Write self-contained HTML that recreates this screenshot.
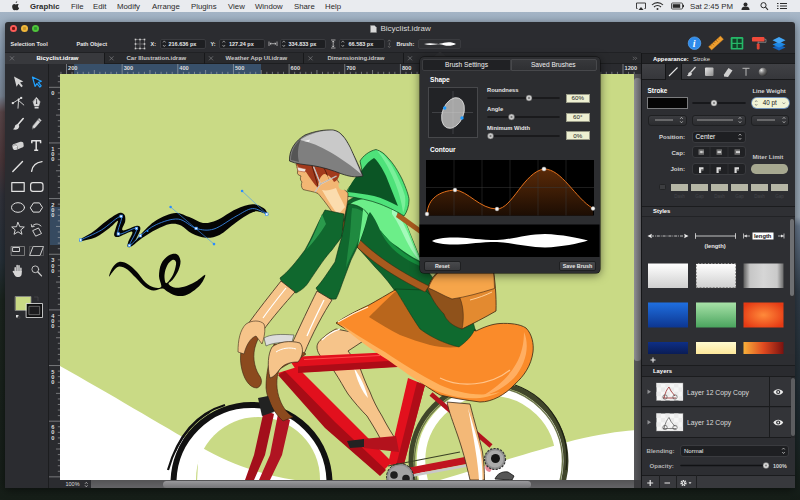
<!DOCTYPE html>
<html><head><meta charset="utf-8"><title>Graphic</title>
<style>
*{box-sizing:border-box;margin:0;padding:0}
html,body{width:800px;height:500px;overflow:hidden;background:#1a221c;font-family:"Liberation Sans",sans-serif}
.a{position:absolute}
#desk{left:0;top:0;width:800px;height:500px;background:
 linear-gradient(to bottom,#a9b8c8 0px,#9fb0c2 22px,#8597ab 60px,#7c8898 96px,#5c484b 112px,#4d383b 160px,#33343d 195px,#27313a 260px,#1b251f 300px,#161e18 500px)}
#deskr{left:790px;top:12px;width:10px;height:488px;background:linear-gradient(to bottom,#a9b8c8 0,#9fb0c2 10px,#97a6b6 100px,#9aa8b6 205px,#66768a 214px,#4a5868 250px,#323e4a 280px,#27333c 340px,#1e2a30 400px,#18221e 460px,#141c17 488px)}
#menubar{left:0;top:0;width:800px;height:12px;background:#e9ebef;color:#2a2a2a;font-size:7.800px;line-height:13px;white-space:nowrap}
#menubar span{position:absolute;top:0}
#win{left:5px;top:22px;width:790px;height:466px;background:#2b2c30;border-radius:3px 3px 0 0;overflow:hidden;box-shadow:0 2px 8px rgba(0,0,0,.5)}
#in{left:-5px;top:-22px;width:800px;height:500px}
.t{position:absolute;white-space:nowrap;color:#e6e6e6;font-size:5.5px;line-height:8px;font-weight:bold}
.fld{position:absolute;background:#1e1f22;border:0.5px solid #3a3b3f;border-radius:2px;height:10px}
.r{font-weight:normal}
</style></head><body>
<div id="desk" class="a"></div>
<div id="deskr" class="a"></div>
<div id="menubar" class="a">
<svg class="a" style="left:11.200px;top:1px" width="9" height="10" viewBox="0 0 18 20"><path d="M12.5 0.5c.2 1.6-1.2 3.6-3 3.5-.2-1.700 1.400-3.400 3-3.500zM15.800 7.200c-1.400.9-2 2.100-2 3.400 0 1.600 1 3 2.500 3.600-.6 1.700-2.200 4.500-3.900 4.500-1.100 0-1.600-.7-2.900-.7-1.300 0-1.900.7-2.900.7-1.800 0-4.300-4-4.300-7.400 0-3.300 2.100-5.100 4.200-5.100 1.300 0 2.300.8 3 .8.800 0 1.900-.9 3.400-.9 1.100 0 2.200.4 2.900 1.100z" fill="#2a2a2a"/></svg>
<span style="left:30px;font-weight:bold">Graphic</span>
<span style="left:71px">File</span>
<span style="left:93px">Edit</span>
<span style="left:117px">Modify</span>
<span style="left:152px">Arrange</span>
<span style="left:191px">Plugins</span>
<span style="left:228px">View</span>
<span style="left:255px">Window</span>
<span style="left:294px">Share</span>
<span style="left:325px">Help</span>
<span style="left:690px">Sat 2:45 PM</span>
<svg class="a" style="left:634px;top:0" width="160" height="12" viewBox="634 0 160 12">
<!-- airplay -->
<path d="M637.500,8.500h-1v-5.500h9v5.500h-1" fill="none" stroke="#2a2a2a" stroke-width="0.900"/><path d="M638.500,10l2.500,-3l2.500,3z" fill="#2a2a2a"/>
<!-- wifi -->
<path d="M652,5a7.500,7.500 0 0 1 11,0" fill="none" stroke="#2a2a2a" stroke-width="1.100"/><path d="M654,7a5,5 0 0 1 7,0" fill="none" stroke="#2a2a2a" stroke-width="1.100"/><circle cx="657.500" cy="9" r="1" fill="#2a2a2a"/>
<!-- battery -->
<rect x="671.500" y="3" width="11" height="6" rx="1" fill="none" stroke="#2a2a2a" stroke-width="0.800"/><rect x="672.700" y="4.200" width="7.500" height="3.600" fill="#2a2a2a"/><rect x="683" y="4.800" width="1" height="2.400" fill="#2a2a2a"/>
<!-- user -->
<circle cx="745.500" cy="4.500" r="2" fill="#2a2a2a"/><path d="M741.500,10c0,-3 2,-3.500 4,-3.500s4,.5 4,3.500z" fill="#2a2a2a"/>
<!-- search -->
<circle cx="763.500" cy="5.200" r="2.600" fill="none" stroke="#2a2a2a" stroke-width="1"/><path d="M765.500,7.200l2.500,2.600" stroke="#2a2a2a" stroke-width="1.100"/>
<!-- list -->
<path d="M777,3.500h1.500M780,3.500h7M777,6h1.500M780,6h7M777,8.500h1.500M780,8.500h7" stroke="#2a2a2a" stroke-width="1.100"/>
</svg>
</div>
<div id="win" class="a"><div id="in" class="a">
<!-- traffic lights -->
<div class="a" style="left:9.500px;top:25.200px;width:7px;height:7px;border-radius:50%;background:radial-gradient(circle,#7a1512 0,#7a1512 1.300px,#fc5b57 1.800px)"></div>
<div class="a" style="left:20.700px;top:25.200px;width:7px;height:7px;border-radius:50%;background:radial-gradient(circle,#c8962a 0,#c8962a 1.300px,#f0b73a 2px)"></div>
<div class="a" style="left:31.800px;top:25.200px;width:7px;height:7px;border-radius:50%;background:radial-gradient(circle,#2f9a2a 0,#2f9a2a 1.300px,#4fc43c 2px)"></div>
<!-- title -->
<svg class="a" style="left:370px;top:24.500px" width="7" height="8" viewBox="0 0 7 8"><path d="M.5.500h4l2 2v5h-6z" fill="#d9d9d9" stroke="#888" stroke-width=".5"/></svg>
<div class="t r" style="left:380.500px;top:24px;font-size:8px;line-height:10px;color:#dcdcdc">Bicyclist.idraw</div>
<!-- toolbar -->
<div class="t" style="left:10.500px;top:39.500px">Selection Tool</div>
<div class="t" style="left:76.500px;top:39.500px">Path Object</div>
<svg class="a" style="left:134px;top:38px" width="12" height="12" viewBox="0 0 12 12"><path d="M1.500,1.500h9v9h-9zM1.500,6h9M6,1.500v9" fill="none" stroke="#8a8a8a" stroke-width=".6"/><g fill="#cfcfcf"><rect x=".7" y=".7" width="1.600" height="1.600"/><rect x="5.200" y=".7" width="1.600" height="1.600"/><rect x="9.700" y=".7" width="1.600" height="1.600"/><rect x=".7" y="5.200" width="1.600" height="1.600"/><rect x="9.700" y="5.200" width="1.600" height="1.600"/><rect x=".7" y="9.700" width="1.600" height="1.600"/><rect x="5.200" y="9.700" width="1.600" height="1.600"/><rect x="9.700" y="9.700" width="1.600" height="1.600"/></g></svg>
<div class="t" style="left:150.500px;top:39.500px">X:</div>
<div class="fld" style="left:160px;top:38.500px;width:46px"></div>
<div class="t" style="left:168.500px;top:39.500px">216.636 px</div>
<div class="t" style="left:210.500px;top:39.500px">Y:</div>
<div class="fld" style="left:219px;top:38.500px;width:45.500px"></div>
<div class="t" style="left:229px;top:39.500px">127.24 px</div>
<div class="fld" style="left:280px;top:38.500px;width:46px"></div>
<div class="t" style="left:288.500px;top:39.500px">334.833 px</div>
<div class="fld" style="left:338.500px;top:38.500px;width:46px"></div>
<div class="t" style="left:348.500px;top:39.500px">66.583 px</div>
<svg class="a" style="left:160px;top:38px" width="240" height="12" viewBox="160 38 240 12" fill="none" stroke="#bdbdbd" stroke-width=".7">
<g id="stp"><path d="M163,42.500l1.300,-1.600l1.300,1.600M163,45l1.300,1.600l1.300,-1.600"/></g>
<path d="M222.500,42.500l1.300,-1.600l1.300,1.600M222.500,45l1.300,1.600l1.300,-1.600"/>
<path d="M282.500,42.500l1.300,-1.600l1.300,1.600M282.500,45l1.300,1.600l1.300,-1.600"/>
<path d="M341.500,42.500l1.300,-1.600l1.300,1.600M341.500,45l1.300,1.600l1.300,-1.600"/>
<!-- width icon -->
<path d="M269,41.500v4.500M277,41.500v4.500M270,43.700h6M271.200,42.700l-1.200,1l1.200,1M274.800,42.700l1.200,1l-1.200,1" stroke="#d5d5d5"/>
<!-- height icon -->
<path d="M331,40h4.500M331,48h4.500M333.200,41v6M332.200,42.200l1,-1.200l1,1.200M332.200,45.800l1,1.200l1,-1.200" stroke="#d5d5d5"/>
<!-- link icon -->
<path d="M388,41.500l1.300,-1.600l1.300,1.600M388,46l1.300,1.600l1.300,-1.600M389.300,42.500v3" stroke="#777"/>
</svg>
<div class="t" style="left:396.500px;top:39.500px">Brush:</div>
<div class="fld" style="left:418px;top:38.500px;width:43px;background:#2f3033"></div>
<svg class="a" style="left:420px;top:40px" width="40" height="8" viewBox="0 0 40 8"><path d="M4,4C8,2.800 12,3 16,3.800C19,4.200 21,3.800 24,2.800C28,1.800 33,2.200 36,4C33,5.800 28,6.200 24,5.200C21,4.300 19,4 16,4.400C12,5 8,5.200 4,4Z" fill="#fff"/></svg>
<!-- right toolbar icons -->
<svg class="a" style="left:684px;top:34px" width="108" height="19" viewBox="684 34 108 19">
<circle cx="694.500" cy="43.200" r="6.300" fill="#2f8bea"/><circle cx="694.500" cy="43.200" r="6.300" fill="none" stroke="#5fb0ff" stroke-width=".6"/>
<text x="692.700" y="46.800" font-family="Liberation Serif,serif" font-style="italic" font-weight="bold" font-size="10" fill="#fff">i</text>
<g transform="rotate(-42 716 43)"><rect x="708" y="40.800" width="16" height="4.500" fill="#f0a030" stroke="#c87818" stroke-width=".4"/><path d="M710.500,40.800v1.800M713,40.800v2.500M715.500,40.800v1.800M718,40.800v2.500M720.500,40.800v1.800" stroke="#8a5008" stroke-width=".55"/></g>
<rect x="730.700" y="37" width="12.600" height="12.600" rx="1.200" fill="#25b868"/><g fill="#123f27"><rect x="732.500" y="38.800" width="4" height="4"/><rect x="737.700" y="38.800" width="4" height="4"/><rect x="732.500" y="44" width="4" height="4"/><rect x="737.700" y="44" width="4" height="4"/></g>
<rect x="752" y="37" width="12.500" height="4.600" rx="1.200" fill="#f04a3a"/><path d="M758.200,41.600v2.200" stroke="#999" stroke-width="1"/><rect x="756.800" y="43.400" width="2.800" height="6" rx=".8" fill="#e04535"/><path d="M764.500,39.300h1.500v3h-7" fill="none" stroke="#aaa" stroke-width=".6"/>
<path d="M779,44.500l6.500,3l-6.500,3l-6.500,-3z" fill="#1565c0"/><path d="M779,41.500l6.500,3l-6.500,3l-6.500,-3z" fill="#1e88e5"/><path d="M779,37l6.500,3.200l-6.500,3.200l-6.500,-3.200z" fill="#42a5f5"/>
</svg>
<!-- tab row -->
<div class="a" style="left:5px;top:52px;width:636px;height:12px;background:#292a2d;border-top:.6px solid #202124;border-bottom:.5px solid #1d1e20"></div>
<div class="a" style="left:5px;top:53px;width:99px;height:10.500px;background:#38393d"></div>
<div class="a" style="left:104px;top:53px;width:.6px;height:10.500px;background:#17181a"></div>
<div class="a" style="left:203.500px;top:53px;width:.6px;height:10.500px;background:#17181a"></div>
<div class="a" style="left:303px;top:53px;width:.6px;height:10.500px;background:#17181a"></div>
<div class="a" style="left:403px;top:53px;width:.6px;height:10.500px;background:#17181a"></div>
<div class="t" style="left:36.500px;top:54.300px;color:#fff;font-size:6px">Bicyclist.idraw</div>
<div class="t" style="left:126.500px;top:54.300px;color:#c9c9c9;font-size:6px">Car Illustration.idraw</div>
<div class="t" style="left:225.500px;top:54.300px;color:#c9c9c9;font-size:6px">Weather App UI.idraw</div>
<div class="t" style="left:327.500px;top:54.300px;color:#c9c9c9;font-size:6px">Dimensioning.idraw</div>
<svg class="a" style="left:5px;top:53px" width="636" height="11" viewBox="5 53 636 11" stroke="#7e7f83" stroke-width=".7" fill="none">
<path d="M10,56.300l4,4M14,56.300l-4,4"/><path d="M109.500,56.300l4,4M113.500,56.300l-4,4"/><path d="M209,56.300l4,4M213,56.300l-4,4"/><path d="M308.500,56.300l4,4M312.500,56.300l-4,4"/><path d="M408,56.300l4,4M412,56.300l-4,4"/>
<path d="M633,56.800l1.500,1.500l-1.500,1.500M635.200,56.800l1.500,1.500l-1.500,1.500" stroke="#8a8a8c" stroke-width=".6"/>
</svg>
<!-- rulers -->
<div class="a" style="left:49px;top:64px;width:592px;height:10px;background:#2a2b2f"></div>
<div class="a" style="left:49px;top:64px;width:11px;height:416px;background:#2a2b2f"></div>
<div class="a" style="left:73.500px;top:64px;width:187.500px;height:10px;background:#38506a"></div>
<div class="a" style="left:50px;top:206.800px;width:10px;height:38.400px;background:#364a60"></div>
<svg class="a" style="left:49px;top:64px" width="592" height="416" viewBox="49 64 592 416">
<path d="M60.94,71.800v2.200M66.50,64v10M72.06,71.800v2.200M77.63,71.800v2.200M83.19,71.800v2.200M88.76,71.800v2.200M94.33,70v4M99.89,71.800v2.200M105.45,71.800v2.200M111.02,71.800v2.200M116.58,71.800v2.200M122.15,64v10M127.72,71.800v2.200M133.28,71.800v2.200M138.84,71.800v2.200M144.41,71.800v2.200M149.97,70v4M155.54,71.800v2.200M161.10,71.800v2.200M166.67,71.800v2.200M172.23,71.800v2.200M177.80,64v10M183.36,71.800v2.200M188.93,71.800v2.200M194.50,71.800v2.200M200.06,71.800v2.200M205.62,70v4M211.19,71.800v2.200M216.75,71.800v2.200M222.32,71.800v2.200M227.88,71.800v2.200M233.45,64v10M239.01,71.800v2.200M244.58,71.800v2.200M250.15,71.800v2.200M255.71,71.800v2.200M261.27,70v4M266.84,71.800v2.200M272.40,71.800v2.200M277.97,71.800v2.200M283.53,71.800v2.200M289.10,64v10M294.67,71.800v2.200M300.23,71.800v2.200M305.79,71.800v2.200M311.36,71.800v2.200M316.93,70v4M322.49,71.800v2.200M328.05,71.800v2.200M333.62,71.800v2.200M339.19,71.800v2.200M344.75,64v10M350.31,71.800v2.200M355.88,71.800v2.200M361.44,71.800v2.200M367.01,71.800v2.200M372.57,70v4M378.14,71.800v2.200M383.70,71.800v2.200M389.27,71.800v2.200M394.83,71.800v2.200M400.40,64v10M405.97,71.800v2.200M411.53,71.800v2.200M417.09,71.800v2.200M422.66,71.800v2.200M428.23,70v4M433.79,71.800v2.200M439.35,71.800v2.200M444.92,71.800v2.200M450.49,71.800v2.200M456.05,64v10M461.62,71.800v2.200M467.18,71.800v2.200M472.75,71.800v2.200M478.31,71.800v2.200M483.88,70v4M489.44,71.800v2.200M495.00,71.800v2.200M500.57,71.800v2.200M506.13,71.800v2.200M511.70,64v10M517.26,71.800v2.200M522.83,71.800v2.200M528.39,71.800v2.200M533.96,71.800v2.200M539.52,70v4M545.09,71.800v2.200M550.65,71.800v2.200M556.22,71.800v2.200M561.78,71.800v2.200M567.35,64v10M572.91,71.800v2.200M578.48,71.800v2.200M584.04,71.800v2.200M589.61,71.800v2.200M595.17,70v4M600.74,71.800v2.200M606.31,71.800v2.200M611.87,71.800v2.200M617.43,71.800v2.200M623.00,64v10M628.56,71.800v2.200M634.13,71.800v2.200" stroke="#b8b9bc" stroke-width=".55" fill="none"/>
<path d="M57.800,76.17h2.200M57.800,81.73h2.200M49,87.30h11M57.800,92.86h2.200M57.800,98.43h2.200M57.800,104.00h2.200M57.800,109.56h2.200M56,115.12h4M57.800,120.69h2.200M57.800,126.25h2.200M57.800,131.82h2.200M57.800,137.38h2.200M49,142.95h11M57.800,148.51h2.200M57.800,154.08h2.200M57.800,159.64h2.200M57.800,165.21h2.200M56,170.77h4M57.800,176.34h2.200M57.800,181.90h2.200M57.800,187.47h2.200M57.800,193.03h2.200M49,198.60h11M57.800,204.16h2.200M57.800,209.73h2.200M57.800,215.30h2.200M57.800,220.86h2.200M56,226.43h4M57.800,231.99h2.200M57.800,237.56h2.200M57.800,243.12h2.200M57.800,248.69h2.200M49,254.25h11M57.800,259.81h2.200M57.800,265.38h2.200M57.800,270.94h2.200M57.800,276.51h2.200M56,282.07h4M57.800,287.64h2.200M57.800,293.20h2.200M57.800,298.77h2.200M57.800,304.33h2.200M49,309.90h11M57.800,315.47h2.200M57.800,321.03h2.200M57.800,326.59h2.200M57.800,332.16h2.200M56,337.73h4M57.800,343.29h2.200M57.800,348.85h2.200M57.800,354.42h2.200M57.800,359.99h2.200M49,365.55h11M57.800,371.12h2.200M57.800,376.68h2.200M57.800,382.25h2.200M57.800,387.81h2.200M56,393.38h4M57.800,398.94h2.200M57.800,404.50h2.200M57.800,410.07h2.200M57.800,415.63h2.200M49,421.20h11M57.800,426.77h2.200M57.800,432.33h2.200M57.800,437.89h2.200M57.800,443.46h2.200M56,449.03h4M57.800,454.59h2.200M57.800,460.15h2.200M57.800,465.72h2.200M57.800,471.29h2.200M49,476.85h11" stroke="#b8b9bc" stroke-width=".55" fill="none"/>
<g font-family="Liberation Sans,sans-serif" font-size="5.700" font-weight="bold" fill="#dedede">
<text x="68.0" y="70">200</text>
<text x="123.7" y="70">300</text>
<text x="179.3" y="70">400</text>
<text x="234.9" y="70">500</text>
<text x="290.6" y="70">600</text>
<text x="346.2" y="70">700</text>
<text x="401.9" y="70">800</text>
<text x="457.6" y="70">900</text>
<text x="513.2" y="70">1000</text>
<text x="568.8" y="70">1100</text>
<text x="624.5" y="70">1200</text>
<text x="51.200" y="95.4">0</text>
<text x="51.200" y="151.0">1</text>
<text x="51.200" y="156.1">0</text>
<text x="51.200" y="161.2">0</text>
<text x="51.200" y="206.7">2</text>
<text x="51.200" y="211.8">0</text>
<text x="51.200" y="216.9">0</text>
<text x="51.200" y="262.4">3</text>
<text x="51.200" y="267.5">0</text>
<text x="51.200" y="272.6">0</text>
<text x="51.200" y="318.0">4</text>
<text x="51.200" y="323.1">0</text>
<text x="51.200" y="328.2">0</text>
<text x="51.200" y="373.7">5</text>
<text x="51.200" y="378.8">0</text>
<text x="51.200" y="383.9">0</text>
<text x="51.200" y="429.3">6</text>
<text x="51.200" y="434.4">0</text>
<text x="51.200" y="439.5">0</text>
</g></svg>
<!-- left toolbox -->
<div class="a" style="left:5px;top:64px;width:44px;height:424px;background:#2b2c30;border-right:.5px solid #1c1d1f"></div>
<svg class="a" style="left:5px;top:64px" width="44" height="270" viewBox="5 64 44 270" fill="none" stroke="#e2e2e2" stroke-width=".9" stroke-linejoin="round" stroke-linecap="round">
<!-- row1 arrows -->
<g transform="rotate(-14 14 76.500)"><path d="M14,76.500l0,10.500l2.600,-2.300l1.900,3.900l1.800,-.8l-1.900,-3.900l3.500,-.3z" fill="#d4d4d4" stroke="none"/></g>
<g transform="rotate(-14 32.500 77)"><path d="M32.500,77l7.600,6.300l-3.300,.4l2,4l-1.600,.8l-2,-4l-2.500,2.200z" fill="#20262e" stroke="#22a2ff" stroke-width="1.200"/></g>
<!-- row2 node / pen -->
<path d="M12.800,103.100l8.400,-5.200M18.600,99.200l-.6,9M18.600,100.500l5.200,4.500" stroke-width=".9"/><rect x="20.200" y="96.900" width="2" height="2" fill="#e2e2e2" stroke="none"/><rect x="11.800" y="102.100" width="2" height="2" fill="#e2e2e2" stroke="none"/><circle cx="18.600" cy="99.600" r="1" fill="#e2e2e2" stroke="none"/>
<path d="M36.600,97.600l3.400,4.200l-1.300,4.300h-4.200l-1.300,-4.300z" fill="#d8d8d8" stroke="#d8d8d8" stroke-width=".6"/><path d="M36.600,99.500v3.200" stroke="#2b2c30" stroke-width=".8"/><circle cx="36.600" cy="103.300" r=".8" fill="#2b2c30" stroke="none"/><rect x="34.600" y="107" width="4" height="1.500" fill="#d8d8d8" stroke="none"/>
<!-- row3 brush / pencil -->
<path d="M23.200,118.500l-5.400,6.200" stroke-width="1.600"/><path d="M17.600,124.300c-1.200,-.2 -2.800,.8 -2.800,2.600c-.3,1.300 -1.400,2 -2.200,2.100c2.400,1.500 6,.8 6.600,-2.400c.2,-1 -.5,-2 -1.600,-2.300z" fill="#d8d8d8" stroke="none"/>
<path d="M39.300,118.600l1.900,1.900l-6.300,7.200l-2.600,1.300l.7,-2.900z" fill="#d8d8d8" stroke="#d8d8d8" stroke-width=".5"/><path d="M32.300,129l.5,-1.700l1.200,1.100z" fill="#2b2c30" stroke="none"/><path d="M38.200,119.800l1.900,1.900" stroke="#2b2c30" stroke-width=".6"/>
<!-- row4 eraser / T -->
<path d="M12.300,146.200c0,-1 .6,-1.700 1.600,-2.100l6.400,-2.300c1.200,-.4 2.400,0 3,1l.4,2.600c.1,1 -.5,1.800 -1.500,2.200l-6.200,2.300c-1.300,.4 -2.500,0 -3.100,-1.200z" fill="#d2d2d2" stroke="none"/><path d="M13.500,145.200c1.200,-.8 2.800,-.6 3.600,.6l.5,3.400" stroke="#6a6a6a" stroke-width=".6" fill="none"/><path d="M13.800,147.400l3,-1" stroke="#f4f4f4" stroke-width=".9"/>
<path d="M31.800,143.200v-2.400h8.800v2.400M36.200,140.800v9.300M34.200,150.300h4" stroke-width="1.500" stroke-linecap="butt"/>
<!-- row5 line / arc -->
<path d="M12.800,171.400l9.700,-9.800" stroke-width="1.400"/>
<path d="M31.600,171.400c.6,-5.200 4.400,-9 10.400,-9.800" stroke-width="1.400"/>
<!-- row6 rect / rounded rect -->
<rect x="11.800" y="182.600" width="12.400" height="8.800" stroke-width="1.200"/>
<rect x="30.600" y="182.600" width="12.400" height="8.800" rx="2.300" stroke-width="1.200"/>
<!-- row7 ellipse / hexagon -->
<ellipse cx="18" cy="207.500" rx="6.500" ry="4.800" stroke-width="1"/>
<path d="M30.500,207.500l3,-4.600h6l3,4.600l-3,4.600h-6z" stroke-width="1"/>
<!-- row8 star / rotate -->
<path d="M18,222.500l1.800,4.200l4.500,.3l-3.500,2.900l1.200,4.400l-4,-2.500l-4,2.500l1.200,-4.400l-3.500,-2.900l4.500,-.3z" stroke-width=".9"/>
<path d="M33,230.500l5.500,-2.500l3,5.500l-5.500,2.500z" stroke-width=".9"/><path d="M32,226.500c2,-3 6,-3.500 9,-.5" stroke-width=".9"/><path d="M31.300,224.500l.5,2.500l2.500,-.6" stroke-width=".8"/>
<!-- row9 -->
<rect x="11.500" y="246.500" width="13" height="9" stroke-width=".7" stroke="#9a9a9a"/><rect x="13" y="247.500" width="6.500" height="4" stroke-width=".9"/>
<path d="M33.500,246.500h10l-3.500,9h-10z" stroke-width=".9"/><path d="M30,246.500h13.500v9h-13.500z" stroke-width=".4" stroke="#888"/>
<!-- row10 hand / zoom -->
<g stroke="#d6d6d6" stroke-width="1.500" stroke-linecap="round"><path d="M15.200,272v-4.200M17.100,271v-5.600M19,271v-5.200M20.900,272v-3.800M13.400,271.500l2,3"/></g>
<path d="M14.400,271h7.300v2.500c0,2 -1.200,3.500 -3,3.500h-1.600c-1.400,0 -2.100,-1 -2.700,-2.500z" fill="#d6d6d6" stroke="none"/>
<circle cx="35.300" cy="269.300" r="3.400" stroke-width=".9" stroke="#cfcfcf"/><path d="M37.900,272l3.600,3.900" stroke-width="1.300" stroke="#cfcfcf"/>
<!-- colors -->
<rect x="15.500" y="296.500" width="15.500" height="14" fill="#c9da85" stroke="#8a8a8a" stroke-width=".8"/>
<rect x="26.500" y="303.500" width="16" height="14" fill="#0e0e0f" stroke="#e8e8e8" stroke-width=".8"/>
<rect x="29.300" y="306.300" width="10.400" height="8.400" fill="#1c1c1e" stroke="#8a8a8a" stroke-width=".7"/>
<path d="M34.500,297h3.500v3.500" stroke="#4a4b4f" stroke-width=".7"/>
<rect x="16" y="315" width="2.500" height="2.500" fill="#e0e0e0" stroke="none"/><rect x="18" y="316.300" width="2" height="2" fill="#2b2c30" stroke="#666" stroke-width=".3"/>
</svg>
<!-- canvas -->
<svg class="a" id="art" style="left:60px;top:74px" width="573.500" height="406" viewBox="60 74 573.500 406">
<rect x="60" y="74" width="576" height="406" fill="#c9da85"/>
<!-- ground -->
<path d="M60,366 C110,394 160,424 200,447 C240,468 270,477 300,480 L60,480Z" fill="#fff"/>
<path d="M440,480 C480,468 520,455 575,440 C600,434 620,431 636,430 L636,480Z" fill="#fff"/>
<!-- rear wheel -->
<circle cx="490.500" cy="461" r="69.500" fill="none" stroke="#fff" stroke-width="8.500"/>
<circle cx="488.500" cy="461" r="77.500" fill="none" stroke="#40462a" stroke-width="5"/>
<circle cx="488.500" cy="461" r="74" fill="none" stroke="#6d774c" stroke-width="1.400"/>
<path d="M515,385 A78,78 0 0 1 566,470" fill="none" stroke="#1c1f12" stroke-width="1.200"/>
<!-- front wheel -->
<circle cx="251.500" cy="483" r="76" fill="#fff"/>
<circle cx="258" cy="479" r="62" fill="#c9da85"/>
<path d="M197,482 L199,446 C232,465 264,476 302,481Z" fill="#fff"/>
<circle cx="251.500" cy="483" r="78" fill="none" stroke="#111" stroke-width="6"/>
<path d="M168,470 C178,435 198,413 225,405" fill="none" stroke="#111" stroke-width="2.200"/>
<path d="M175,452 C184,432 196,420 210,412" fill="none" stroke="#111" stroke-width="1.500"/>
<!-- seat stays / chain stays -->
<path d="M431,394 L491,446" stroke="#b3121d" stroke-width="4.500" fill="none"/>
<path d="M400,473 L468,460" stroke="#c0141f" stroke-width="7" fill="none"/>
<path d="M402,477.500 L470,465" stroke="#c8c8c8" stroke-width="2.500" fill="none"/>
<!-- fork -->
<path d="M264,410 L254,455 L245,480 L254,480 L265,455 L274,414Z" fill="#a30f1b"/>
<path d="M278,414 L270,455 L259,480 L270,480 L282,455 L290,420Z" fill="#b01422"/>
<!-- frame -->
<path d="M278,373 L297,367 L345,415 L392,462 L380,474 L325,426Z" fill="#e2101d"/>
<path d="M278,375 L285,371 L335,422 L386,470 L380,476 L325,428Z" fill="#a80c16"/>
<path d="M408,378 L425,385 L403,468 L388,464Z" fill="#e2101d"/>
<path d="M417,382 L425,385 L403,468 L396,466Z" fill="#b00d18"/>
<!-- back leg -->
<path d="M447,402 L470,404 C474,420 480,440 482.500,452 C484,462 484.500,472 484.500,480 L470,480 C466,462 462,448 457.500,435 C453,422 449,412 447,402Z" fill="#f3b877" stroke="#3a2a1a" stroke-width=".8"/>
<path d="M468,408 C472,422 478,440 480.500,452 C482,462 482.500,472 482.500,480 L479,480 C478,462 474,440 468,408Z" fill="#fff"/>
<!-- front leg -->
<path d="M336,329 C330,332 326,335 324,337 C320,340 317,343 317,347 C317,352 320,356 324,360 C328,365 331,368 334,371 C340,380 344,388 348,394 C354,402 361,410 367,416 C372,424 377,432 381,440 L396,440 C391,432 386,424 382,416 C377,408 373,400 370,392 C366,384 363,376 360,368 C356,362 352,356 348,351 C356,346 364,340 372,336Z" fill="#f6c48a" stroke="#3a2a1a" stroke-width=".8"/>
<path d="M354,368 C360,376 365,386 368,398 C362,392 357,380 354,368Z" fill="#fff"/>
<path d="M322,340 C328,334 334,331 340,329" stroke="#fff" stroke-width="1.200" fill="none"/>
<path d="M362,439 L396,436 L399,452 L364,448Z" fill="#b3121d"/>
<path d="M347,441 L364,439 L364,447 L350,448Z" fill="#222"/>
<!-- top tube -->
<path d="M290,361 L300,356.500 L394,352 L398,366.500 L298,372.500Z" fill="#e2101d"/>
<path d="M298,366.500 L396,360.500 L398,367 L298,373Z" fill="#ad0c17"/>
<path d="M304,359.500 L380,355.500" stroke="#ff4a4a" stroke-width="1" fill="none"/>
<!-- crank / gears -->
<circle cx="400" cy="477" r="13.500" fill="#8f8f8f" stroke="#222" stroke-width="1" stroke-dasharray="2.500 1.200"/>
<circle cx="400" cy="477" r="11.500" fill="#a4a4a4"/>
<circle cx="394" cy="475" r="3.800" fill="#1e1e1e"/><circle cx="406" cy="478.500" r="3.800" fill="#1e1e1e"/>
<path d="M486,464 C484,468 486,472 490,472 L494,466Z" fill="#e88a98"/>
<circle cx="495" cy="459" r="10.500" fill="#8f8f8f" stroke="#333" stroke-width="1.200" stroke-dasharray="2.200 1.200"/><circle cx="495" cy="459" r="8.500" fill="#ababab"/><circle cx="495.500" cy="458.500" r="4.500" fill="#151515"/>
<path d="M388,466 L460,452" stroke="#3a4024" stroke-width="1.200" fill="none"/>
<path d="M495,479 C497,474 502,471 508,472 L514,476 L512,480Z" fill="#555" stroke="#111" stroke-width=".8"/>
<!-- torso -->
<path d="M340,210 C346,200 356,195 366,194 C380,194 394,204 402,214 C408,228 414,244 420,258 C426,270 434,280 442,288 C448,296 451,306 452,316 L476,330 C470,342 456,348 444,344 C432,338 424,332 418,326 C410,316 404,306 399,297 C392,286 384,276 375,267 C368,259 362,252 356,246 C350,236 344,222 340,210Z" fill="#0f642c" stroke="#0a2e14" stroke-width=".6"/>
<path d="M349,205 C356,199 368,197 380,199 C392,202 399,208 403,216 C408,228 414,244 420,258 L420,261 C412,257 404,252 398,247 C394,244 390,242 387,238 C384,235 382,232 380,230 C377,223 374,217 370,212 C367,216 366,220 365,224 C361,216 355,210 349,205Z" fill="#6cee89"/>
<path d="M380,230 C386,238 394,246 404,253 C410,257 415,260 420,262.500 L420,266 C410,262 400,256 392,248 C387,243 383,237 380,230Z" fill="#17913f"/>
<path d="M392,207 C398,212 404,224 410,238 C414,248 418,256 421,262 C416,258 410,248 406,240 C402,232 398,222 392,214Z" fill="#a4fabb"/>
<!-- skirt -->
<path d="M336,323 C346,316 358,310 369,305 C378,300 388,294 395,290 L420,300 L462,326 L476,331 C484,327 492,324 500,323.500 C510,323 520,324 526,328 C532,334 534,344 533,352 C531,366 524,376 515,384 C505,395 492,402 480,402 C465,400 452,398 440,395 C428,388 420,382 412,375 C400,366 390,360 380,352 C372,346 362,340 355,335 C348,330 342,327 336,323Z" fill="#fa8b2a" stroke="#3a2410" stroke-width=".8"/>
<path d="M369,317 C378,308 388,298 396,291 L420,329 C432,338 446,344 459,347 C448,348 438,347 430,345 C420,342 410,339 400,335 C390,330 379,323 369,317Z" fill="#b9661c"/>
<path d="M340,324 C355,338 372,350 388,360 C405,372 425,388 445,394 C465,400 485,400 500,392 C480,398 455,392 440,385 C420,375 400,362 385,352 C368,342 352,332 340,324Z" fill="#ffb25e"/>
<path d="M338,322 C348,316 358,311 368,307" stroke="#fff3e0" stroke-width="1.200" fill="none"/>
<path d="M440,378 C460,388 490,386 510,370" stroke="#ffc48a" stroke-width="1.200" fill="none"/>
<path d="M524,332 C530,346 526,364 514,378 C504,388 492,394 482,396 C496,388 508,378 516,364 C522,354 524,342 524,332Z" fill="#ffae62"/>
<!-- hoodie bottom band -->
<path d="M395,289 C402,300 410,314 420,329 C432,338 446,344 459,347 C466,342 472,336 475,329 L470,310 C455,312 440,305 425,290Z" fill="#0f6a2f" stroke="#0a2e14" stroke-width=".5"/>
<!-- bag -->
<path d="M427.500,288.500 C429,284 431,280 434,276 C437,272 440,270 443,268 L493,268 C495,280 496.500,296 496,311 C484,318 472,324 462,329 C452,322 436,306 427.500,288.500Z" fill="#e38a30" stroke="#3a2410" stroke-width=".8"/>
<path d="M427.500,288.500 C440,289 452,293 460,298 C464,308 464,320 462,329 C452,326 446,320 444,314 C436,306 431,297 427.500,288.500Z" fill="#8f521b" stroke="#3a2410" stroke-width=".5"/>
<path d="M428.500,288 C430,283 433,278 436,275 C439,271 442,269 444,268 L493,268 C494,275 494.500,282 494.500,288.500 C480,293 466,297 452,299 C444,296 436,291 428.500,288Z" fill="#f6a54a" stroke="#3a2410" stroke-width=".6"/>
<path d="M470,300 C478,298 486,295 492,292" stroke="#ffd09a" stroke-width="1" fill="none"/>
<!-- strap -->
<path d="M338,222 L343,218 C352,236 380,262 429,286 L425,292 C380,270 350,246 338,222Z" fill="#a85a1e" stroke="#3a2410" stroke-width=".5"/>
<path d="M398,212 L420,228 L420,234 L396,217Z" fill="#a85a1e"/>
<!-- hood -->
<path d="M363,176 L360,161 C363,156 369,151 376,149.500 C381,151 385,154 388,158 C393,163 398,171 402,179 C406,188 409,196 409,200 C409,206 407,212 404,216 C398,212 390,208 380,204 C370,200 358,198 346,196 C346,192 348,188 352,184 C356,180 360,178 363,176Z" fill="#4ee27a" stroke="#0b3a18" stroke-width=".7"/>
<path d="M347.500,192 C350,184 356,176 362,170 C366,164 370,160 374,158 C378,161 382,168 386,176 C390,186 394,196 398,206 C390,202 382,198 374,196 C366,194 356,193 347.500,192Z" fill="#0b5525"/>
<path d="M377,150.500 C382,152 387,158 392,166 C397,175 402,186 405,196 C406,202 405,208 403,213 C402,204 399,192 394,180 C389,168 383,158 377,150.500Z" fill="#7af09a"/>
<!-- neck/face -->
<path d="M296,164 L332,168 L336,178 C340,184 344,190 348,193 C348,200 347,208 343,222 L334,215 C329,207 322,198 318,193.500 C314,191.500 308,191 303,189.500 C301,187 301,184 302,182 C300,180 300,178 301,176 C298,175 297,174 297.500,172 C298,170 297,167 296,164Z" fill="#f2b673" stroke="#3a2a1a" stroke-width=".6"/>
<path d="M322,190 C326,197 332,207 338,215 L345,207 C342,200 338,194 336,188 C331,190 326,191 322,190Z" fill="#fbdcae"/>
<circle cx="343" cy="185.500" r="4.500" fill="#c9da85"/>
<!-- hair -->
<path d="M296,163 L340,170 C340,176 338,180 334,182 C332,178 328,174 324,174 C320,176 318,182 318,188 C314,184 310,178 306,172 C302,170 298,168 296,163Z" fill="#a23a1c"/>
<path d="M312,166 C314,172 316,180 318,186 M324,168 C326,172 328,176 328,180" stroke="#5a1c0c" stroke-width="1" fill="none"/>
<path d="M324,175 C327,174 329,177 328,181 C326,183 323,181 324,175Z" fill="#f2b673"/>
<path d="M313.500,166.500 L320.500,184 L336.500,176 M320.500,184 L315,192" stroke="#e4e4e4" stroke-width="1.300" fill="none"/>
<path d="M313.500,166.500 L320.500,184 L336.500,176 M320.500,184 L315,192" stroke="#555" stroke-width=".3" fill="none"/>
<path d="M297,167 L306,169 L305,172 L298,171Z" fill="#f0e6e0" stroke="#a23a1c" stroke-width=".5"/>
<!-- helmet -->
<path d="M289.500,161 C289,150 295,141 305,135 C315,131 325,129.500 333,130 C340,131 345,137 350,147 C355,158 360,168 363,176 C355,178 348,176 342,174 C332,170 322,167 312,165.500 C304,164.500 296,164 289.500,161Z" fill="#7f7f7f" stroke="#222" stroke-width=".8"/>
<path d="M300,140 C310,133 324,130 333,130.500 C340,131.500 345,138 350,148 C354,157 358,166 361,174 C352,166 340,158 330,152 C320,146 310,142 300,140Z" fill="#c9c9c9"/>
<path d="M291,160 C291,151 295,144 301,139 C298,146 297,154 299,162Z" fill="#555"/>
<path d="M304,141 L310,139.500 L309,142Z" fill="#eee"/>
<!-- sleeves -->
<path d="M325,210 C318,222 312,238 305,250 C296,262 288,272 280,278 C282,284 288,290 296,293 C302,290 306,286 308,283 C318,268 326,256 332,250 C336,244 340,240 342,236 L344,214Z" fill="#10682e" stroke="#0a2e14" stroke-width=".6"/>
<path d="M322,214 C318,226 312,240 306,250 C312,244 320,234 326,224Z" fill="#2a9a4c"/>
<path d="M348,204 C356,204 364,208 368,214 C366,222 364,230 361,238 C358,246 354,254 351,260 C348,268 345,276 342,284 C340,290 338,295 336,299 C328,300 320,296 316,288 C322,282 328,272 335,262 C337,254 339,246 342,236 C344,226 346,214 348,204Z" fill="#10682e" stroke="#0a2e14" stroke-width=".6"/>
<path d="M352,208 C358,208 363,211 366,215 C364,224 360,236 356,246 C352,254 348,262 346,268 C347,256 349,244 350,234 C351,224 351,216 352,208Z" fill="#1f8a40"/>
<path d="M363,209 C365,211 367,213 368,215 C366,224 362,236 358,246 C360,236 362,222 363,209Z" fill="#6cee89"/>
<!-- forearms -->
<path d="M281,281 C270,295 258,310 248,324 L262,332 C272,318 286,302 295,292Z" fill="#f6c48a" stroke="#3a2a1a" stroke-width=".8"/>
<path d="M286,288 C278,298 270,308 263,318" stroke="#fff" stroke-width="1.200" fill="none"/>
<path d="M317,291 C310,305 300,326 290,348 L304,354 C312,334 324,312 332,300Z" fill="#f6c48a" stroke="#3a2a1a" stroke-width=".8"/>
<path d="M324,300 C318,312 312,324 307,336" stroke="#fff" stroke-width="1.300" fill="none"/>
<!-- handlebars -->
<path d="M250,328 C243,338 239,352 241,365 C243,378 249,388 257,388 C262,386 263,380 259,375 C254,367 252,355 256,344 L260,334Z" fill="#8b4a1e" stroke="#3a2410" stroke-width=".6"/>
<path d="M264,338 C270,334 282,334 294,335 L292,342 C282,342 272,343 266,346Z" fill="#dcdcdc" stroke="#444" stroke-width=".6"/>
<path d="M274,344 C290,346 300,350 306,354 C298,360 286,364 279,370 C276,378 276,390 280,400 C283,408 288,414 293,417 L283,421 C274,413 267,400 266,388 C266,376 268,366 270,360Z" fill="#8b4a1e" stroke="#3a2410" stroke-width=".6"/>
<path d="M258,398 L268,396 L274,412 L262,416Z" fill="#222"/>
<!-- hands -->
<path d="M238,352 C238,340 240,330 246,324 C252,320 260,320 264,324 C266,330 264,338 262,344 L256,336 C250,338 246,346 244,354Z" fill="#f6c48a" stroke="#3a2a1a" stroke-width=".6"/>
<path d="M270,378 C267,366 268,354 272,347 C278,342 290,340 300,343 C304,348 303,356 298,362 C290,362 284,364 280,369 C277,373 274,377 270,378Z" fill="#f6c48a" stroke="#3a2a1a" stroke-width=".7"/>
<path d="M276,352 C282,348 290,347 296,349" stroke="#fff" stroke-width="1" fill="none"/>
<!-- brush strokes -->
<path d="M80.6,239.1 C82.7,237.6 88.6,234.8 93.0,231.7 C97.4,228.6 102.4,223.8 106.8,220.7 C111.1,217.6 116.2,214.0 119.1,213.0 C122.1,212.0 123.3,213.3 124.4,214.7 C125.4,216.0 125.5,218.6 125.2,221.3 C124.9,223.9 120.7,229.6 122.7,230.3 C124.7,231.1 134.1,225.8 137.0,225.7 C139.9,225.5 140.6,226.9 140.3,229.5 C140.0,232.1 135.2,240.3 135.4,241.1 C135.5,241.8 137.6,237.4 141.1,233.9 C144.6,230.4 150.5,223.6 156.3,220.2 C162.0,216.7 170.0,213.5 175.5,213.0 C181.0,212.5 184.7,215.5 189.3,217.1 C193.8,218.8 198.4,222.4 203.0,222.9 C207.6,223.4 211.3,222.4 216.8,220.2 C222.3,217.9 230.1,211.8 236.0,209.2 C242.0,206.5 247.9,204.4 252.5,204.2 C257.1,204.0 261.0,206.5 263.5,208.1 C266.0,209.6 267.0,212.5 267.6,213.6 C268.3,214.7 269.3,215.0 267.6,214.7 C266.0,214.3 261.0,211.5 258.0,211.4 C255.0,211.2 253.4,211.7 249.8,213.6 C246.1,215.4 241.1,219.1 236.0,222.6 C231.0,226.2 224.6,232.5 219.5,235.0 C214.5,237.5 210.3,238.0 205.8,237.8 C201.2,237.5 196.1,235.7 192.0,233.6 C187.9,231.6 184.7,227.0 181.0,225.4 C177.3,223.8 174.1,223.3 170.0,224.0 C165.9,224.7 160.8,227.2 156.3,229.5 C151.7,231.8 146.5,235.0 142.5,237.8 C138.5,240.5 134.5,244.5 132.1,246.0 C129.6,247.5 128.3,247.5 127.7,246.8 C127.0,246.1 127.5,244.4 128.2,241.9 C128.9,239.4 133.7,232.5 132.1,231.7 C130.5,230.9 121.6,236.3 118.6,236.9 C115.6,237.5 114.6,236.7 114.2,235.3 C113.7,233.8 115.2,230.6 115.8,228.1 C116.4,225.7 118.8,220.7 117.8,220.7 C116.7,220.7 113.2,225.1 109.5,227.9 C105.8,230.6 100.6,235.0 95.8,237.2 C90.9,239.4 83.1,240.7 80.6,241.1 C78.1,241.4 78.6,240.7 80.6,239.1Z" fill="#050505"/>
<path d="M109.0,276.8 C108.7,276.4 110.6,270.5 112.3,268.0 C114.0,265.5 116.4,262.5 119.1,262.0 C121.9,261.4 125.8,263.0 128.8,264.7 C131.7,266.4 134.3,269.2 137.0,272.1 C139.8,275.1 142.5,279.8 145.3,282.3 C148.0,284.8 150.9,286.5 153.5,287.3 C156.2,288.0 160.3,288.5 161.2,286.7 C162.1,284.9 159.0,280.1 159.0,276.3 C159.0,272.5 159.6,267.3 161.2,263.9 C162.8,260.4 166.0,257.2 168.6,255.6 C171.2,254.0 174.9,253.3 176.9,254.3 C178.9,255.2 180.2,258.4 180.5,261.1 C180.7,263.9 179.5,267.7 178.3,270.8 C177.0,273.8 174.4,277.4 172.8,279.6 C171.2,281.8 168.2,282.6 168.6,284.0 C169.1,285.3 172.5,287.5 175.5,287.8 C178.5,288.1 182.8,287.1 186.5,285.9 C190.2,284.6 194.4,282.2 197.5,280.4 C200.6,278.6 204.5,274.4 205.2,274.9 C205.9,275.3 203.4,280.6 201.6,283.1 C199.9,285.7 197.5,287.9 194.8,290.0 C192.0,292.1 188.3,294.6 185.1,295.5 C181.9,296.4 178.5,296.2 175.5,295.5 C172.5,294.8 169.5,292.5 167.3,291.4 C165.1,290.2 164.6,288.8 162.3,288.6 C160.0,288.5 156.4,290.8 153.5,290.6 C150.7,290.3 148.2,289.4 145.3,287.3 C142.3,285.1 138.6,280.6 135.6,277.6 C132.7,274.7 130.1,271.2 127.4,269.4 C124.6,267.6 121.4,266.4 119.1,266.6 C116.8,266.9 115.3,269.1 113.6,270.8 C111.9,272.5 109.2,277.3 109.0,276.8Z" fill="#050505"/>
<path d="M165.9,283.1 C165.0,282.4 164.3,277.9 164.5,274.9 C164.7,271.9 165.9,267.8 167.3,265.3 C168.6,262.7 171.3,260.2 172.8,259.8 C174.2,259.3 175.8,260.4 176.1,262.5 C176.3,264.6 175.1,269.3 174.1,272.1 C173.1,275.0 171.4,277.7 170.0,279.6 C168.6,281.4 166.8,283.9 165.9,283.1Z" fill="#c9da85"/>
<!-- selection path -->
<path d="M80.6,240.0 C84.1,238.3 94.5,234.0 101.3,230.1 C108.0,226.1 118.2,215.7 121.1,216.3 C123.9,216.9 115.7,231.9 118.3,233.9 C120.9,235.9 134.6,226.5 136.5,228.4 C138.3,230.3 128.7,244.2 129.3,245.5 C129.9,246.7 135.8,239.3 140.3,235.8 C144.8,232.3 149.9,227.4 156.3,224.6 C162.6,221.8 171.6,218.4 178.3,219.1 C184.9,219.7 190.2,226.8 196.1,228.4 C202.1,230.1 207.4,231.0 214.0,229.0 C220.7,226.9 229.6,219.7 236.0,216.3 C242.4,212.9 247.4,209.0 252.5,208.6 C257.7,208.2 264.4,213.2 266.8,214.1" fill="none" stroke="#3d96ff" stroke-width=".8"/>
<path d="M170.6,207.0 L214.0,244.1 M242.1,191.0 L266.8,214.1" stroke="#3d96ff" stroke-width=".6" fill="none"/>
<g fill="#fff" stroke="#3d96ff" stroke-width=".7"><rect x="79.4" y="238.8" width="2.400" height="2.400"/><rect x="119.9" y="215.1" width="2.400" height="2.400"/><rect x="117.1" y="232.7" width="2.400" height="2.400"/><rect x="135.3" y="227.2" width="2.400" height="2.400"/><rect x="128.1" y="244.3" width="2.400" height="2.400"/><rect x="139.1" y="234.6" width="2.400" height="2.400"/><rect x="194.9" y="227.2" width="2.400" height="2.400"/><rect x="265.6" y="212.9" width="2.400" height="2.400"/></g>
<g fill="#2a8cff"><circle cx="170.6" cy="207.0" r="1.300"/><circle cx="214.0" cy="244.1" r="1.300"/><circle cx="242.1" cy="191.0" r="1.300"/><circle cx="147.5" cy="230.9" r="1"/></g>
</svg>
<!-- scrollbars -->
<div class="a" style="left:633.500px;top:74px;width:7.500px;height:406px;background:linear-gradient(to right,#58585b,#444447)"></div>
<div class="a" style="left:634px;top:77.500px;width:6.500px;height:283px;background:linear-gradient(to right,#8e8e93,#5e5e62);border-radius:3px"></div>
<div class="a" style="left:60px;top:480px;width:581px;height:8px;background:linear-gradient(#535355,#636366)"></div>
<div class="a" style="left:633.500px;top:480px;width:7.500px;height:8px;background:#3a3a3d"></div>
<div class="a" style="left:60px;top:480px;width:31px;height:8px;background:#2b2c30"></div>
<div class="t r" style="left:65.500px;top:480px;font-size:5.500px;color:#ddd">100%</div>
<svg class="a" style="left:84px;top:481px" width="5" height="7" viewBox="0 0 5 7"><path d="M1,2.800l1.300,-1.500l1.300,1.500M1,4.300l1.300,1.500l1.300,-1.500" fill="none" stroke="#ccc" stroke-width=".7"/></svg>
<div class="a" style="left:163px;top:480.500px;width:368px;height:7px;background:linear-gradient(#98989b,#747477);border-radius:3.500px"></div>
<!-- brush popup -->
<svg class="a" style="left:432px;top:51px" width="16" height="7" viewBox="0 0 16 7"><path d="M0,7L8,0.500L16,7Z" fill="#2d2e31"/></svg>
<div class="a" style="left:419.500px;top:56.500px;width:180.500px;height:216px;background:#2c2d30;border-radius:4px;box-shadow:0 2px 10px rgba(0,0,0,.55),0 0 0 .5px #111"></div>
<div class="a" style="left:422px;top:59px;width:88.500px;height:11.500px;background:#202124;border:.5px solid #3c3d40;border-radius:2px 0 0 2px"></div>
<div class="a" style="left:510.500px;top:59px;width:86px;height:11.500px;background:linear-gradient(#37383b,#2f3033);border:.5px solid #47484b;border-radius:0 2px 2px 0"></div>
<div class="t r" style="left:422px;top:60.700px;width:89px;text-align:center;font-size:6.600px;color:#f0f0f0">Brush Settings</div>
<div class="t r" style="left:510px;top:60.700px;width:86.500px;text-align:center;font-size:6.600px;color:#f0f0f0">Saved Brushes</div>
<div class="t" style="left:430px;top:75.500px;font-size:6.600px;color:#fff">Shape</div>
<div class="a" style="left:428px;top:87px;width:49.500px;height:50.500px;background:#222326;border:.6px solid #47484b"></div>
<svg class="a" style="left:428px;top:87px" width="50" height="51" viewBox="428 87 50 51">
<path d="M432,112.500h41M453,91v43" stroke="#55565a" stroke-width=".6"/>
<ellipse cx="453" cy="113" rx="10.500" ry="16" transform="rotate(22 453 113)" fill="#a6a6a6" stroke="#e4e4e4" stroke-width=".7"/>
<path d="M441,112.500h24M453,97v32" stroke="#c4c4c4" stroke-width=".4" opacity=".7"/>
<circle cx="444.700" cy="108" r="1.700" fill="#1e9bff"/><circle cx="462" cy="118" r="1.700" fill="#1e9bff"/>
</svg>
<div class="t" style="left:487px;top:86px;font-size:5.800px">Roundness</div>
<div class="t" style="left:487px;top:105px;font-size:5.800px">Angle</div>
<div class="t" style="left:487px;top:124px;font-size:5.800px">Minimum Width</div>
<svg class="a" style="left:485px;top:93px" width="80" height="48" viewBox="485 93 80 48">
<g stroke="#141416" stroke-width="1.600" stroke-linecap="round"><path d="M488,98h71M488,117h71M488,136h71"/></g>
<g fill="#c8c8c8" stroke="#555" stroke-width=".5"><circle cx="529" cy="98" r="3"/><circle cx="511.500" cy="117" r="3"/><circle cx="490.500" cy="136" r="3"/></g>
<g fill="#777"><circle cx="529" cy="98" r="1.100"/><circle cx="511.500" cy="117" r="1.100"/><circle cx="490.500" cy="136" r="1.100"/></g>
</svg>
<div class="a" style="left:566px;top:93.500px;width:23.500px;height:9px;background:#eef0d2;border:.5px solid #9a9b88"></div>
<div class="a" style="left:566px;top:112.500px;width:23.500px;height:9px;background:#eef0d2;border:.5px solid #9a9b88"></div>
<div class="a" style="left:566px;top:131px;width:23.500px;height:9px;background:#eef0d2;border:.5px solid #9a9b88"></div>
<div class="t r" style="left:566px;top:94px;width:23.500px;text-align:center;color:#222;font-size:6.200px">60%</div>
<div class="t r" style="left:566px;top:113px;width:23.500px;text-align:center;color:#222;font-size:6.200px">60°</div>
<div class="t r" style="left:566px;top:131.500px;width:23.500px;text-align:center;color:#222;font-size:6.200px">0%</div>
<div class="t" style="left:430px;top:146px;font-size:6.600px;color:#fff">Contour</div>
<svg class="a" style="left:419px;top:158px" width="181" height="100" viewBox="419 158 181 100">
<defs><linearGradient id="cg" x1="0" y1="0" x2="0" y2="1"><stop offset="0" stop-color="#5a2a08"/><stop offset="1" stop-color="#1c0d03"/></linearGradient></defs>
<rect x="426" y="160" width="168" height="55.500" fill="#000"/>
<path id="cv" d="M427,214 C428,198 440,191 455,190 C468,191 480,209 497,209 C512,209 524,172 544,169 C562,169 575,198 593,208.500 L593,215.500 L427,215.500Z" fill="url(#cg)"/>
<path d="M454,160v55.500M482,160v55.500M510,160v55.500M538,160v55.500M566,160v55.500M426,187.500h168" stroke="#3a3a3a" stroke-width=".5"/>
<path d="M427,214 C428,198 440,191 455,190 C468,191 480,209 497,209 C512,209 524,172 544,169 C562,169 575,198 593,208.500" fill="none" stroke="#e2701c" stroke-width="1"/>
<g fill="#f4f4f4" stroke="#999" stroke-width=".4"><circle cx="427" cy="214" r="1.900"/><circle cx="455" cy="190" r="1.900"/><circle cx="497" cy="209" r="1.900"/><circle cx="544" cy="169" r="2.100"/><circle cx="593" cy="208.500" r="1.900"/></g>
<rect x="419.500" y="224.500" width="180" height="32.500" fill="#000"/>
<path d="M432,241 C436,238.500 446,237 458,237.500 C470,238 480,240 497,240 C512,239.500 528,234 545,234 C562,234.500 578,238 588,240.500 C578,243.500 562,247 545,247.500 C528,247.500 512,242.500 497,242 C480,242 470,244 458,244.500 C446,245 436,243.500 432,241Z" fill="#fff"/>
</svg>
<div class="a" style="left:424px;top:260.500px;width:36.500px;height:10px;background:linear-gradient(#48494c,#3a3b3e);border-radius:2px;border:.5px solid #1e1f21"></div>
<div class="a" style="left:559px;top:260.500px;width:37px;height:10px;background:linear-gradient(#48494c,#3a3b3e);border-radius:2px;border:.5px solid #1e1f21"></div>
<div class="t" style="left:424px;top:261.500px;width:36.500px;text-align:center;font-size:5.400px">Reset</div>
<div class="t" style="left:559px;top:261.500px;width:37px;text-align:center;font-size:5.400px">Save Brush</div>
<!-- right panel -->
<div class="a" style="left:641px;top:52.500px;width:154px;height:436px;background:#2d2e32;border-left:.6px solid #151618"></div>
<div class="a" style="left:641.500px;top:52.500px;width:154px;height:11.500px;background:#242528;border-top:.5px solid #1b1c1e;border-bottom:.5px solid #1b1c1e"></div>
<div class="t" style="left:653px;top:54.800px;font-size:5.900px;color:#fff">Appearance:</div>
<div class="t r" style="left:693px;top:54.800px;font-size:5.900px;color:#ddd">Stroke</div>
<div class="a" style="left:641.500px;top:64px;width:154px;height:15.500px;background:linear-gradient(#404145,#36373b);border-bottom:.6px solid #17181a"></div>
<div class="a" style="left:665.200px;top:64px;width:17.200px;height:15.500px;background:#27282b;border-left:.5px solid #151618;border-right:.5px solid #151618"></div>
<svg class="a" style="left:664px;top:64px" width="110" height="16" viewBox="664 64 110 16">
<path d="M669,76l8.500,-8.500" stroke="#e4e4e4" stroke-width="1.100"/>
<path d="M695.500,67l-5,5.500" stroke="#d8d8d8" stroke-width="1.300"/><path d="M690.500,72c-1.500,0 -2.500,1 -2.300,2.500c-.4,.8 -1,1 -1.500,1c2,1.200 4.800,.8 5.300,-1.800z" fill="#d8d8d8"/>
<defs><linearGradient id="sq" x1="0" y1="0" x2="1" y2="1"><stop offset="0" stop-color="#e8e8e8"/><stop offset="1" stop-color="#8c8c8c"/></linearGradient><radialGradient id="ball" cx=".32" cy=".3" r=".75"><stop offset="0" stop-color="#e6e6e6"/><stop offset=".45" stop-color="#7c7c7c"/><stop offset="1" stop-color="#2c2c2c"/></radialGradient></defs>
<rect x="705" y="67.500" width="8.500" height="8.500" rx="1" fill="url(#sq)"/>
<path d="M724,74.500l4.500,-6.500l4,2.500l-4.500,6.500l-4,-.5z" fill="#d0d0d0"/>
<path d="M742.500,68.300h7M746,68.300v7.500" stroke="#b8b8b8" stroke-width="1" fill="none"/>
<circle cx="763" cy="72" r="4.300" fill="url(#ball)"/>
</svg>
<div class="t" style="left:647.500px;top:87px;font-size:6.400px;color:#fff">Stroke</div>
<div class="t" style="left:752.500px;top:87px;font-size:5.900px;color:#d8d8d8">Line Weight</div>
<div class="a" style="left:647px;top:97px;width:40.500px;height:11.500px;background:#050505;border:.8px solid #7b7c7e"></div>
<svg class="a" style="left:690px;top:96px" width="60" height="14" viewBox="690 96 60 14"><path d="M693,103h52" stroke="#111214" stroke-width="1.600" stroke-linecap="round"/><circle cx="714" cy="103" r="3.100" fill="#d2d2d2" stroke="#555" stroke-width=".5"/><circle cx="714" cy="103" r="1.100" fill="#777"/></svg>
<div class="a" style="left:751.500px;top:98.300px;width:37px;height:9.600px;background:#f1f3d6;border-radius:4.800px;box-shadow:0 0 0 .9px rgba(130,170,220,.8)"></div>
<div class="t r" style="left:751px;top:99.200px;width:37.500px;text-align:center;color:#111;font-size:6.300px">40 pt</div>
<svg class="a" style="left:751px;top:97px" width="38" height="12" viewBox="751 97 38 12" fill="none" stroke="#666" stroke-width=".6"><path d="M755,102l1.200,-1.500l1.200,1.500M755,104l1.200,1.500l1.200,-1.500"/><path d="M782.500,102.500l1.300,1.500l1.300,-1.500"/></svg>
<!-- dropdown row -->
<div class="fld" style="left:648px;top:114.500px;width:38.500px;height:11px;border-radius:3px;background:linear-gradient(#3a3b3f,#2b2c2f);border-color:#1f2022"></div>
<div class="fld" style="left:692px;top:114.500px;width:53.500px;height:11px;border-radius:3px;background:linear-gradient(#3a3b3f,#2b2c2f);border-color:#1f2022"></div>
<div class="fld" style="left:751px;top:114.500px;width:38px;height:11px;border-radius:3px;background:linear-gradient(#3a3b3f,#2b2c2f);border-color:#1f2022"></div>
<svg class="a" style="left:648px;top:114px" width="142" height="12" viewBox="648 114 142 12" fill="none"><path d="M655,120h18M697,120h36M757,120h18" stroke="#9d9d9d" stroke-width="1"/><g stroke="#d0d0d0" stroke-width=".7"><path d="M680.200,118.800l1.300,-1.500l1.300,1.500M680.200,121.300l1.300,1.500l1.300,-1.500M738.700,118.800l1.300,-1.500l1.300,1.500M738.700,121.300l1.300,1.500l1.300,-1.500M782.700,118.800l1.300,-1.500l1.300,1.500M782.700,121.300l1.300,1.500l1.300,-1.500"/></g></svg>
<div class="t" style="left:635px;top:132.500px;width:50px;text-align:right;font-size:6.100px;color:#d4d4d4">Position:</div>
<div class="fld" style="left:692px;top:131px;width:53.500px;height:11.500px;border-radius:3px"></div>
<div class="t r" style="left:695.500px;top:132.600px;font-size:6.600px;color:#f4f4f4">Center</div>
<svg class="a" style="left:737px;top:131px" width="8" height="12" viewBox="737 131 8 12" fill="none" stroke="#d0d0d0" stroke-width=".7"><path d="M738.700,135.500l1.300,-1.500l1.300,1.500M738.700,138l1.300,1.500l1.300,-1.500"/></svg>
<div class="t" style="left:635px;top:148.500px;width:50px;text-align:right;font-size:6.100px;color:#d4d4d4">Cap:</div>
<div class="t" style="left:635px;top:165px;width:50px;text-align:right;font-size:6.100px;color:#d4d4d4">Join:</div>
<div class="fld" style="left:692px;top:146px;width:53.500px;height:12px;border-radius:3px;background:#202124"></div>
<div class="fld" style="left:692px;top:163px;width:53.500px;height:12px;border-radius:3px;background:#202124"></div>
<svg class="a" style="left:692px;top:146px" width="54" height="30" viewBox="692 146 54 30">
<path d="M710,146.500v11M728,146.500v11M710,163.500v11M728,163.500v11" stroke="#3a3b3e" stroke-width=".6"/>
<g fill="#6e6e6e"><rect x="698.500" y="149.300" width="5.500" height="5.500"/><rect x="716.500" y="149.300" width="5.500" height="5.500"/><rect x="734.500" y="149.300" width="5.500" height="5.500"/></g>
<g fill="#e8e8e8"><path d="M699.500,152l2,-1.300v.8h2v1h-2v.8z"/><rect x="717.500" y="151.300" width="3.500" height="1.500"/><rect x="736" y="151.300" width="4" height="1.500"/></g>
<g fill="#dadada"><path d="M699,167.300h4.500v2.200h-2.300v3.500h-2.200zM716.500,167.300h4.500v2.200h-2.300v3.500h-2.200zM734.500,167.300h4.500v2.200h-2.300v3.500h-2.200z"/></g>
<g fill="#777"><rect x="701.200" y="169.500" width="2.300" height="1.200"/><rect x="718.700" y="169.500" width="2.300" height="1.200"/><rect x="736.700" y="169.500" width="2.300" height="1.200"/></g>
</svg>
<div class="t" style="left:752.500px;top:153px;font-size:6.100px;color:#c8c8c8">Miter Limit</div>
<div class="a" style="left:751.200px;top:164.200px;width:37px;height:9.500px;background:#a6a890;border-radius:4.800px"></div>
<!-- dash row -->
<div class="a" style="left:659px;top:183.500px;width:6.500px;height:6.500px;background:#3c3d40;border-radius:1.500px;border:.5px solid #232426"></div>
<div class="a" style="left:671px;top:183.500px;width:17px;height:7.500px;background:#b5b6a5"></div>
<div class="a" style="left:691px;top:183.500px;width:17px;height:7.500px;background:#b5b6a5"></div>
<div class="a" style="left:711px;top:183.500px;width:17px;height:7.500px;background:#b5b6a5"></div>
<div class="a" style="left:731px;top:183.500px;width:17px;height:7.500px;background:#b5b6a5"></div>
<div class="a" style="left:751px;top:183.500px;width:17px;height:7.500px;background:#b5b6a5"></div>
<div class="a" style="left:771px;top:183.500px;width:17px;height:7.500px;background:#b5b6a5"></div>
<div class="t r" style="left:671px;top:192.500px;width:17px;text-align:center;font-size:4.500px;color:#45464a">Dash</div>
<div class="t r" style="left:691px;top:192.500px;width:17px;text-align:center;font-size:4.500px;color:#45464a">Gap</div>
<div class="t r" style="left:711px;top:192.500px;width:17px;text-align:center;font-size:4.500px;color:#45464a">Dash</div>
<div class="t r" style="left:731px;top:192.500px;width:17px;text-align:center;font-size:4.500px;color:#45464a">Gap</div>
<div class="t r" style="left:751px;top:192.500px;width:17px;text-align:center;font-size:4.500px;color:#45464a">Dash</div>
<div class="t r" style="left:771px;top:192.500px;width:17px;text-align:center;font-size:4.500px;color:#45464a">Gap</div>
<!-- styles -->
<div class="a" style="left:641.500px;top:205.500px;width:154px;height:11.500px;background:#2f3034;border-top:.6px solid #1b1c1e;border-bottom:.5px solid #222326"></div>
<div class="t" style="left:653px;top:207.300px;font-size:5.900px;color:#fff">Styles</div>
<div class="a" style="left:641.500px;top:217px;width:154px;height:137px;background:#2e2f33"></div>
<svg class="a" style="left:641px;top:217px" width="154" height="140" viewBox="641 217 154 140">
<defs>
<linearGradient id="g1" x1="0" y1="0" x2="0" y2="1"><stop offset="0" stop-color="#ffffff"/><stop offset="1" stop-color="#cfcfcf"/></linearGradient>
<linearGradient id="g3" x1="0" y1="0" x2="1" y2="0"><stop offset="0" stop-color="#5e5e5e"/><stop offset=".16" stop-color="#c6c6c6"/><stop offset=".5" stop-color="#d6d6d6"/><stop offset=".84" stop-color="#cacaca"/><stop offset="1" stop-color="#6a6a6a"/></linearGradient>
<linearGradient id="g4" x1="0" y1="0" x2="0" y2="1"><stop offset="0" stop-color="#1f6fe0"/><stop offset="1" stop-color="#0d3690"/></linearGradient>
<linearGradient id="g5" x1="0" y1="0" x2="0" y2="1"><stop offset="0" stop-color="#a8e2a8"/><stop offset="1" stop-color="#4aa45e"/></linearGradient>
<radialGradient id="g6" cx=".5" cy=".5" r=".6"><stop offset="0" stop-color="#ff8a3a"/><stop offset="1" stop-color="#e63a14"/></radialGradient>
<linearGradient id="g7" x1="0" y1="0" x2="0" y2="1"><stop offset="0" stop-color="#0e2f86"/><stop offset="1" stop-color="#0a1c55"/></linearGradient>
<linearGradient id="g8" x1="0" y1="0" x2="0" y2="1"><stop offset="0" stop-color="#fffbd0"/><stop offset="1" stop-color="#fde79a"/></linearGradient>
<linearGradient id="g9" x1="0" y1="0" x2="1" y2="0"><stop offset="0" stop-color="#f7b03a"/><stop offset=".5" stop-color="#e04a20"/><stop offset="1" stop-color="#7a1210"/></linearGradient>
</defs>
<!-- row1 -->
<path d="M651,236h34" stroke="#e8e8e8" stroke-width=".8" stroke-dasharray="3 1 .8 1"/>
<path d="M647.500,236l4.500,-2.200l-1,2.200l1,2.200zM688.500,236l-4.500,-2.200l1,2.200l-1,2.200z" fill="#f0f0f0"/>
<path d="M695.500,236h40M695.500,233.200v5.600M735.500,233.200v5.600" stroke="#e8e8e8" stroke-width=".8"/>
<path d="M743.500,233.500v5M784,233.500v5M744,236h6M778,236h6" stroke="#e8e8e8" stroke-width=".7"/>
<path d="M744.300,236l2.500,-1.500v3zM783.500,236l-2.500,-1.500v3z" fill="#e8e8e8"/>
<rect x="752.500" y="232.500" width="21" height="7" fill="#fff"/>
<g font-family="Liberation Sans,sans-serif" font-weight="bold" font-size="5.800"><text x="704.500" y="248" fill="#e8e8e8">(length)</text><text x="754" y="238.300" fill="#111">length</text></g>
<!-- row2 -->
<rect x="648" y="263.500" width="40" height="24.500" fill="url(#g1)"/>
<rect x="696" y="263.500" width="40" height="24.500" fill="url(#g1)" stroke="#3a3a3a" stroke-width=".9" stroke-dasharray="2 1.300"/>
<rect x="743.500" y="263.500" width="40" height="24.500" fill="url(#g3)"/>
<!-- row3 -->
<rect x="648" y="302.500" width="40" height="25" fill="url(#g4)"/>
<rect x="696" y="302.500" width="40" height="25" fill="url(#g5)"/>
<rect x="743.500" y="302.500" width="40" height="25" fill="url(#g6)"/>
<!-- row4 -->
<rect x="648" y="342" width="40" height="12" fill="url(#g7)"/>
<rect x="696" y="342" width="40" height="12" fill="url(#g8)"/>
<rect x="743.500" y="342" width="40" height="12" fill="url(#g9)"/>
<rect x="790" y="219" width="4" height="77" rx="2" fill="#6e6f72"/>
</svg>
<div class="a" style="left:641.500px;top:354px;width:154px;height:11px;background:#2d2e32"></div>
<svg class="a" style="left:649px;top:356px" width="8" height="8" viewBox="0 0 8 8"><path d="M4,1.500v5M1.500,4h5" stroke="#e8e8e8" stroke-width="1.100"/></svg>
<!-- layers -->
<div class="a" style="left:641.500px;top:365px;width:154px;height:12px;background:#2a2b2f;border-top:.5px solid #1b1c1e;border-bottom:.5px solid #1b1c1e"></div>
<div class="t" style="left:653px;top:366.800px;font-size:5.900px;color:#fff">Layers</div>
<div class="a" style="left:641.500px;top:377px;width:149px;height:30px;background:#333438;border-bottom:.6px solid #1a1b1d"></div>
<div class="a" style="left:641.500px;top:407.500px;width:149px;height:30px;background:#333438;border-bottom:.6px solid #1a1b1d"></div>
<div class="a" style="left:769px;top:377px;width:.6px;height:60px;background:#1a1b1d"></div>
<div class="a" style="left:790.500px;top:377px;width:4.500px;height:61px;background:#27282b"></div>
<div class="a" style="left:791px;top:378px;width:3.500px;height:58px;background:#5c5d60;border-radius:2px"></div>
<svg class="a" style="left:641px;top:377px" width="150" height="61" viewBox="641 377 150 61">
<path d="M647.500,389.500l3.500,2.200l-3.500,2.200zM647.500,420l3.500,2.200l-3.500,2.200z" fill="#8f9093"/>
<rect x="656.500" y="383" width="26.500" height="17.500" fill="#f6f6f6" stroke="#999" stroke-width=".4"/>
<rect x="656.500" y="413.500" width="26.500" height="17.500" fill="#f6f6f6" stroke="#999" stroke-width=".4"/>
<g fill="#ebebeb"><rect x="656.500" y="383" width="4.400" height="4.400"/><rect x="665.300" y="383" width="4.400" height="4.400"/><rect x="674.100" y="383" width="4.400" height="4.400"/><rect x="660.900" y="387.400" width="4.400" height="4.400"/><rect x="669.700" y="387.400" width="4.400" height="4.400"/><rect x="678.500" y="387.400" width="4.400" height="4.400"/><rect x="656.500" y="391.800" width="4.400" height="4.400"/><rect x="665.300" y="391.800" width="4.400" height="4.400"/><rect x="674.100" y="391.800" width="4.400" height="4.400"/><rect x="660.900" y="396.200" width="4.400" height="4.300"/><rect x="669.700" y="396.200" width="4.400" height="4.300"/><rect x="678.500" y="396.200" width="4.400" height="4.300"/>
<rect x="656.500" y="413.500" width="4.400" height="4.400"/><rect x="665.300" y="413.500" width="4.400" height="4.400"/><rect x="674.100" y="413.500" width="4.400" height="4.400"/><rect x="660.900" y="417.900" width="4.400" height="4.400"/><rect x="669.700" y="417.900" width="4.400" height="4.400"/><rect x="678.500" y="417.900" width="4.400" height="4.400"/><rect x="656.500" y="422.300" width="4.400" height="4.400"/><rect x="665.300" y="422.300" width="4.400" height="4.400"/><rect x="674.100" y="422.300" width="4.400" height="4.400"/><rect x="660.900" y="426.700" width="4.400" height="4.300"/><rect x="669.700" y="426.700" width="4.400" height="4.300"/><rect x="678.500" y="426.700" width="4.400" height="4.300"/></g>
<path d="M664,398c1,-5 3,-9 5,-11l2,4l4,5M663,398h13" stroke="#9a2a2a" stroke-width=".8" fill="none"/><circle cx="665" cy="397" r="2.200" fill="none" stroke="#444" stroke-width=".6"/><circle cx="675" cy="397" r="2.200" fill="none" stroke="#444" stroke-width=".6"/>
<path d="M664,428.500c1,-5 3,-9 5,-11l2,4l4,5M663,428.500h13" stroke="#555" stroke-width=".7" fill="none"/><circle cx="665" cy="427.500" r="2.200" fill="none" stroke="#444" stroke-width=".6"/><circle cx="675" cy="427.500" r="2.200" fill="none" stroke="#444" stroke-width=".6"/>
<g fill="#ececec"><path d="M773.300,392c2.200,-3.800 7.700,-3.800 9.900,0c-2.200,3.800 -7.700,3.800 -9.900,0z"/><path d="M773.300,422.500c2.200,-3.800 7.700,-3.800 9.900,0c-2.200,3.800 -7.700,3.800 -9.900,0z"/></g>
<circle cx="778.200" cy="392" r="2.100" fill="#333438"/><circle cx="778.200" cy="422.500" r="2.100" fill="#333438"/><circle cx="778.200" cy="392" r=".9" fill="#ececec"/><circle cx="778.200" cy="422.500" r=".9" fill="#ececec"/>
</svg>
<div class="t r" style="left:687px;top:388.600px;font-size:6.800px;color:#dcdcdc">Layer 12 Copy Copy</div>
<div class="t r" style="left:687px;top:419.100px;font-size:6.800px;color:#dcdcdc">Layer 12 Copy</div>
<!-- blending -->
<div class="a" style="left:641.500px;top:438px;width:154px;height:35px;background:#2d2e32"></div>
<div class="t" style="left:646.500px;top:447px;font-size:6.100px;color:#b4b4b4">Blending:</div>
<div class="fld" style="left:680px;top:445px;width:109px;height:11.500px;border-radius:3px"></div>
<div class="t r" style="left:684px;top:446.800px;font-size:6px;color:#f0f0f0">Normal</div>
<svg class="a" style="left:780px;top:445px" width="8" height="12" viewBox="780 445 8 12" fill="none" stroke="#d0d0d0" stroke-width=".7"><path d="M782.200,449.500l1.300,-1.500l1.300,1.500M782.200,452l1.300,1.500l1.300,-1.500"/></svg>
<div class="t" style="left:649.500px;top:461.500px;font-size:6.100px;color:#b4b4b4">Opacity:</div>
<svg class="a" style="left:678px;top:460px" width="95" height="12" viewBox="678 460 95 12"><path d="M681,465.500h85" stroke="#111214" stroke-width="1.600" stroke-linecap="round"/><circle cx="766" cy="465.500" r="3" fill="#d8d8d8" stroke="#555" stroke-width=".5"/><circle cx="766" cy="465.500" r="1.100" fill="#888"/></svg>
<div class="t" style="left:773px;top:461.500px;font-size:5.400px;color:#d4d4d4">100%</div>
<div class="a" style="left:641.500px;top:474.500px;width:154px;height:13.500px;background:#38393d;border-top:.6px solid #1a1b1d"></div>
<div class="a" style="left:658.500px;top:475px;width:.6px;height:13px;background:#1f2022"></div>
<div class="a" style="left:675.500px;top:475px;width:.6px;height:13px;background:#1f2022"></div>
<div class="a" style="left:696px;top:475px;width:.6px;height:13px;background:#1f2022"></div>
<svg class="a" style="left:641px;top:474.500px" width="60" height="15" viewBox="641 473 60 15"><path d="M650.200,478v6M647.200,481h6M664.500,481h5.500" stroke="#e8e8e8" stroke-width="1.200"/><circle cx="683.500" cy="481" r="2.300" fill="none" stroke="#e8e8e8" stroke-width="1.600" stroke-dasharray="1.200 .6"/><circle cx="683.500" cy="481" r="1.400" fill="none" stroke="#e8e8e8" stroke-width="1"/><path d="M688.500,480.300l1.500,1.600l1.500,-1.600z" fill="#e8e8e8"/></svg>
</div></div>
</body></html>
